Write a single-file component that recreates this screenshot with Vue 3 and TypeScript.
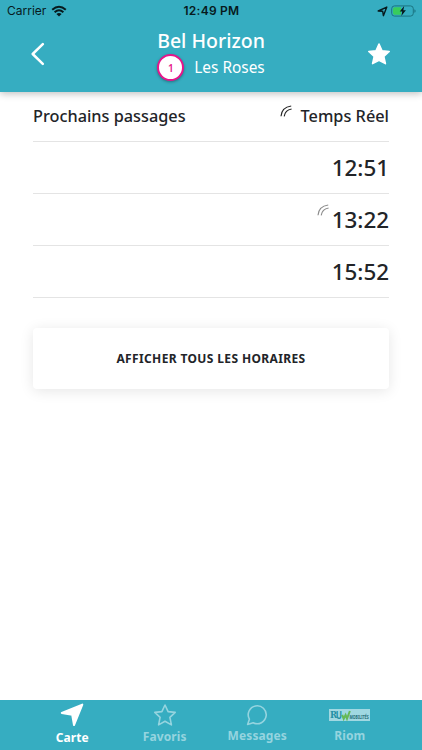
<script setup lang="ts">
interface Passage {
  time: string
  live: boolean
}

const passages: Passage[] = [
  { time: '12:51', live: false },
  { time: '13:22', live: true },
  { time: '15:52', live: false },
]
</script>

<template>
  <div class="screen">
    <header class="header">
      <div class="status">
        <div class="status-left">
          <span>Carrier</span>
          <svg class="wifi" width="16" height="12" viewBox="0 0 16 12">
            <path d="M1.2 4.7Q8 -1.3 14.8 4.7M3.6 7.2Q8 3.4 12.4 7.2" fill="none" stroke="#071a1d" stroke-width="2" />
            <path d="M5.4 8.9Q8 6.9 10.6 8.9L8 11.5Z" fill="#071a1d" />
          </svg>
        </div>
        <div class="clock">12:49 PM</div>
        <div class="status-right">
          <svg width="11" height="11" viewBox="0 0 11 11">
            <path d="M1.2 5L9.8 1.1L6.4 9.7L5.7 5.3Z" fill="none" stroke="#071a1d" stroke-width="1.4" stroke-linejoin="round" />
          </svg>
          <svg width="25" height="12" viewBox="0 0 25 12">
            <rect x="0.7" y="0.9" width="21.6" height="10.2" rx="2.8" fill="none" stroke="#1b7481" />
            <path d="M3.7 2.2H10V9.8H3.7Q2 9.8 2 8.1V3.9Q2 2.2 3.7 2.2Z" fill="#38cc5c" />
            <path d="M23.4 4.2Q24.6 4.6 24.6 6T23.4 7.8Z" fill="#1b7481" />
            <path d="M13.2 1L8.7 6.6H11.3L10.3 11L14.9 5.3H12.3Z" fill="#06181a" />
          </svg>
        </div>
      </div>
      <div class="nav">
        <svg class="back" width="14" height="24" viewBox="0 0 14 24">
          <path d="M11.8 2.2L1.7 12L11.8 21.8" fill="none" stroke="#fff" stroke-width="2.5" stroke-linecap="round" stroke-linejoin="round" />
        </svg>
        <div class="titles">
          <h1>Bel Horizon</h1>
          <div class="line">
            <span class="badge">1</span>
            <span class="direction">Les Roses</span>
          </div>
        </div>
        <svg class="star" width="24" height="24" viewBox="0 0 24 24">
          <path d="M12 2L15 8.8L22.2 9.5L16.8 14.4L18.4 21.6L12 18.3L5.6 21.6L7.2 14.4L1.8 9.5L9 8.8Z" fill="#fff" stroke="#fff" stroke-width="1.6" stroke-linejoin="round" />
        </svg>
      </div>
    </header>

    <main class="content">
      <div class="heading">
        <span class="next">Prochains passages</span>
        <span class="realtime">
          <svg class="signal" width="13" height="13" viewBox="0 0 13 13">
            <path d="M1 11.2Q1.7 2.3 11.2 1M4.2 11.3Q5.1 5.2 11.6 4" fill="none" stroke="#222" stroke-width="1.15" />
          </svg>
          <span>Temps Réel</span>
        </span>
      </div>
      <div v-for="passage in passages" :key="passage.time" class="passage">
        <svg v-if="passage.live" class="signal-live" width="13" height="13" viewBox="0 0 13 13">
          <path d="M1 11.2Q1.7 2.3 11.2 1M4.2 11.3Q5.1 5.2 11.6 4" fill="none" stroke="#8b8b8b" stroke-width="1.15" />
        </svg>
        <span>{{ passage.time }}</span>
      </div>
      <button class="all" type="button">AFFICHER TOUS LES HORAIRES</button>
    </main>

    <nav class="tabs">
      <div class="tab tab-map">
        <svg width="26" height="26" viewBox="0 0 26 26">
          <path d="M2.8 11L23.3 2.6L15 23L13.2 12.8Z" fill="#fff" stroke="#fff" stroke-width="2" stroke-linejoin="round" />
        </svg>
        <span>Carte</span>
      </div>
      <div class="tab tab-favorites">
        <svg width="24" height="24" viewBox="0 0 24 24">
          <path d="M12 2L15.1 8.6L22.2 9.4L16.9 14.3L18.4 21.9L12 18.3L5.6 21.9L7.1 14.3L1.8 9.4L8.9 8.6Z" fill="none" stroke="#95d4df" stroke-width="1.6" stroke-linejoin="round" />
        </svg>
        <span>Favoris</span>
      </div>
      <div class="tab">
        <svg width="24" height="24" viewBox="0 0 24 24">
          <path d="M2.6 21.4L4.4 16.2A9 9 0 1 1 8.2 19.8Z" fill="none" stroke="#95d4df" stroke-width="1.6" stroke-linejoin="round" />
        </svg>
        <span>Messages</span>
      </div>
      <div class="tab">
        <svg class="brand" width="41" height="24" viewBox="0 0 41 24">
          <rect x="0" y="6" width="41" height="12" fill="#a0d8e2" />
          <text class="brand-r" x="1" y="15" textLength="7.2" lengthAdjust="spacingAndGlyphs">R</text>
          <text class="brand-u" x="6.8" y="16" textLength="6.4" lengthAdjust="spacingAndGlyphs">U</text>
          <path d="M13.2 11.8L14.7 15.8L16.6 12L18 15.6L20.9 8" fill="none" stroke="#65b957" stroke-width="2" />
          <text class="brand-m" x="20.4" y="15.5" textLength="19.4" lengthAdjust="spacingAndGlyphs">MOBILITÉS</text>
        </svg>
        <span>Riom</span>
      </div>
    </nav>
  </div>
</template>

<style>
body {
  background: #fff;
}
</style>

<style scoped>
.screen {
  display: flex;
  flex-direction: column;
  height: 750px;
  overflow: hidden;
  background: #fff;
  color: #222428;
  font-family: 'Noto Sans', 'Open Sans', sans-serif;
}
svg {
  display: block;
  flex: none;
}
.header {
  box-sizing: border-box;
  flex: none;
  height: 92px;
  background: #36adc1;
  box-shadow: 0 2px 7px rgba(0, 0, 0, 0.24);
}
.status {
  display: grid;
  grid-template-columns: 1fr auto 1fr;
  align-items: center;
  height: 22px;
  padding: 0 6px 0 7px;
  color: #071a1d;
  font: 12px/22px Inter, sans-serif;
}
.status-left,
.status-right {
  display: flex;
  align-items: center;
  gap: 5px;
}
.status-right {
  justify-content: flex-end;
  gap: 3px;
}
.clock {
  font-weight: 600;
  letter-spacing: 0.25px;
}
.nav {
  display: grid;
  grid-template-columns: 60px 1fr 60px;
  height: 70px;
}
.back {
  margin: 20px 0 0 31px;
}
.star {
  margin: 20px 0 0 5px;
}
.titles {
  display: flex;
  flex-direction: column;
  align-items: center;
  color: #fff;
}
h1 {
  margin: 5px 0 0;
  font-size: 19.5px;
  font-weight: 500;
  line-height: 27px;
}
.line {
  display: flex;
  align-items: center;
  gap: 10px;
  height: 27px;
  font-size: 15.4px;
  line-height: 25px;
}
.direction {
  margin-top: -1px;
}
.badge {
  box-sizing: border-box;
  width: 27px;
  height: 27px;
  margin-top: -1px;
  border: 2px solid #e6168b;
  border-radius: 50%;
  background: #fff;
  color: #e6168b;
  font-size: 10px;
  font-weight: 600;
  line-height: 24px;
  text-align: center;
  box-shadow: 0 1px 3px rgba(0, 0, 0, 0.35);
}
.content {
  flex: 1;
  padding: 0 33px;
}
.heading {
  display: flex;
  justify-content: space-between;
  box-sizing: border-box;
  height: 50px;
  padding-top: 11px;
  border-bottom: 1px solid #e4e4e4;
  font-size: 16.3px;
  font-weight: 500;
  line-height: 26px;
}
.realtime {
  display: flex;
  gap: 8px;
}
.signal {
  margin-top: 2px;
}
.passage {
  display: flex;
  justify-content: flex-end;
  box-sizing: border-box;
  height: 52px;
  border-bottom: 1px solid #e4e4e4;
  font-size: 22.4px;
  font-weight: 500;
  line-height: 51px;
}
.signal-live {
  margin: 10px 2px 0 0;
}
.all {
  display: block;
  width: 100%;
  height: 61px;
  margin: 30px 0 0;
  padding: 0;
  border: 0;
  border-radius: 4px;
  background: #fff;
  color: #222428;
  font: 700 12px/61px 'Noto Sans', 'Open Sans', sans-serif;
  letter-spacing: 0.37px;
  box-shadow: 0 2px 14px rgba(0, 0, 0, 0.1);
}
.tabs {
  display: grid;
  grid-template-columns: repeat(4, 92.5px);
  justify-content: center;
  flex: none;
  height: 50px;
  background: #36adc1;
}
.tab {
  display: flex;
  flex-direction: column;
  align-items: center;
  padding-top: 3px;
  color: #95d4df;
  font-size: 12px;
  font-weight: 700;
  letter-spacing: 0.1px;
  line-height: 17px;
}
.tab-favorites span {
  margin-top: 1px;
}
.tab-map {
  padding-top: 2px;
  color: #fff;
}
.tab-map span {
  margin-top: 1px;
}
.brand-r,
.brand-u {
  fill: #2290a5;
  font: 700 10px 'DejaVu Serif', serif;
}
.brand-u {
  font-family: 'Noto Sans', sans-serif;
}
.brand-m {
  fill: #236a76;
  font: 700 5px 'Noto Sans', sans-serif;
}
</style>
